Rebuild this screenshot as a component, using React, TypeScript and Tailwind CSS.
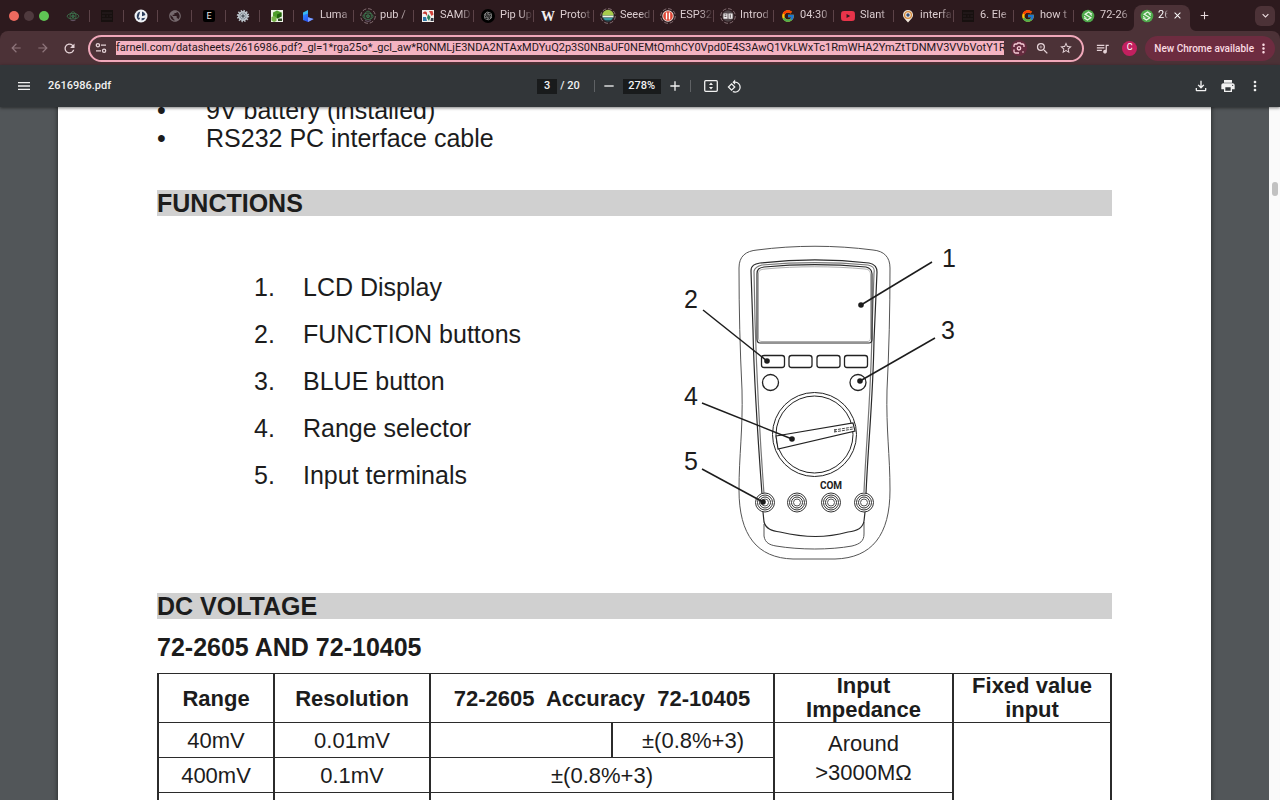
import type { ReactNode } from 'react';
import {
  MdAdd,
  MdArrowBack,
  MdArrowForward,
  MdClose,
  MdExpandMore,
  MdMenu,
  MdMoreVert,
  MdOutlineFileDownload,
  MdOutlineZoomIn,
  MdPrint,
  MdPublic,
  MdQueueMusic,
  MdRefresh,
  MdRemove,
  MdRotate90DegreesCcw,
  MdStarBorder,
} from 'react-icons/md';
import { FcGoogle } from 'react-icons/fc';
import { SiYoutube } from 'react-icons/si';
import { RiOpenaiFill } from 'react-icons/ri';

const URL_TEXT =
  'farnell.com/datasheets/2616986.pdf?_gl=1*rga25o*_gcl_aw*R0NMLjE3NDA2NTAxMDYuQ2p3S0NBaUF0NEMtQmhCY0Vpd0E4S3AwQ1VkLWxTc1RmWHA2YmZtTDNMV3VVbVotY1Rc';

const Svg = ({ children, className = 'size-[14px]' }: { children: ReactNode; className?: string }) => (
  <svg viewBox="0 0 14 14" className={`${className} shrink-0`} aria-hidden="true">
    {children}
  </svg>
);

const Atom = ({ ring = false }: { ring?: boolean }) => (
  <Svg className={ring ? 'size-4' : 'size-[14px]'}>
    {ring && <circle cx="7" cy="7" r="6.4" fill="none" stroke="#8d777c" strokeWidth="0.8" strokeDasharray="3.4 1.6" />}
    <g fill="none" stroke="#3f7a52" strokeWidth="0.8">
      <ellipse cx="7" cy="7.2" rx={ring ? 4.4 : 5.8} ry="2.8" />
      <path d="M4.600 9.800C3.200 6 4.800 2.800 7 2.800s3.800 3.200 2.400 7" />
      <circle cx="7" cy="7.200" r="1.300" fill="#2f5a40" />
    </g>
    <path d="M4.500 11a5 5 0 0 0 5 0" stroke="#74657a" fill="none" strokeWidth="0.8" />
  </Svg>
);

const DarkSheet = () => (
  <Svg>
    <rect x="1" y="1" width="12" height="12" fill="#17100f" />
    <path d="M2 4h10M2 7h3M6.5 7h1.6M9.5 7H12M2 10h10" stroke="#2c2124" strokeWidth="0.9" />
  </Svg>
);

const Compass = () => (
  <Svg>
    <circle cx="7" cy="7" r="6.500" fill="#eef1f5" />
    <path d="M6.200 2.600A4.600 4.600 0 0 0 5 11l1.200-2.200H4.400Z" fill="#2b3d5c" />
    <path d="M8 2.500a4.600 4.600 0 0 1 3.500 3.600L8 7.200ZM7.600 9.200l3.700-.4a4.600 4.600 0 0 1-3.700 2.800Z" fill="#2b3d5c" />
  </Svg>
);

const LetterE = () => (
  <Svg>
    <rect x="1" y="1" width="12" height="12" rx="2" fill="#000" />
    <text x="7" y="10.200" textAnchor="middle" fontSize="9" fill="#e8e8e8" fontFamily="Roboto, sans-serif">
      E
    </text>
  </Svg>
);

const Gear = () => (
  <Svg>
    <circle cx="7" cy="7" r="5" fill="#87919a" stroke="#b9c1c8" strokeWidth="2.400" strokeDasharray="1.300 1.300" />
    <circle cx="7" cy="7" r="4.200" fill="none" stroke="#cdd3d8" strokeWidth="1" />
    <path d="M7 3.600v6.800M3.600 7h6.800M4.600 4.600l4.800 4.800M9.400 4.600 4.600 9.400" stroke="#dfe4e8" strokeWidth="0.7" />
    <circle cx="7" cy="7" r="1.500" fill="#525b63" />
  </Svg>
);

const GreenBlocks = () => (
  <Svg>
    <rect x="1" y="1" width="12" height="12" fill="#eef3e8" />
    <path d="M3 3.500 7 1.500l4.500 2v4L7 9.500 3 7.500Z" fill="#4f9e2c" />
    <path d="m7 5.500 4.500-2v4L7 9.500Z" fill="#23630f" />
    <path d="m1.500 8 2.500-1 2.500 1.500V12L4 13l-2.500-1.500Z" fill="#78b44a" />
    <path d="M8 9.500h4V12H8Z" fill="#2f4a26" />
  </Svg>
);

const Luma = () => (
  <Svg>
    <defs>
      <linearGradient id="luma" x1="0" x2="1" y1="0" y2="1">
        <stop offset="0" stopColor="#2b8cff" />
        <stop offset="1" stopColor="#2a35e8" />
      </linearGradient>
    </defs>
    <path d="M2 3.500 7 1v7.500l-5 2.700Z" fill="#38b8ef" />
    <path d="M2 11V6l5-1.500v3.700L12.600 10 7 13Z" fill="url(#luma)" />
    <path d="M7 8.200 12.600 10 7 13Z" fill="#7ea2ff" />
  </Svg>
);

const Patchwork = () => (
  <Svg>
    <rect x="1" y="1" width="12" height="12" fill="#f4f1ee" />
    <path d="M1.500 4.500C3 2 5 2 6 4v3l-1.500-2Z" fill="#c63b34" />
    <path d="M8 2h3.500l1 3.500-2 1.500Z" fill="#d2433c" />
    <path d="M2 8h3l1 4H2Z" fill="#2c79a8" />
    <path d="m7 5 2.500 3L8 12l-2-3Z" fill="#2d8059" />
    <path d="M10 9h2.500v3H9.500Z" fill="#353b47" />
  </Svg>
);

const OpenAi = () => (
  <span className="flex size-[14px] shrink-0 items-center justify-center rounded-full bg-black text-[#b8b8b8]">
    <RiOpenaiFill size={10} />
  </span>
);

const LetterW = () => (
  <Svg>
    <text x="7" y="12" textAnchor="middle" fontSize="14" fontWeight="700" fill="#f2eff0" fontFamily="'Liberation Serif', serif">
      W
    </text>
  </Svg>
);

const Ring = ({ children }: { children: ReactNode }) => (
  <Svg className="size-4">
    <circle cx="7" cy="7" r="6.400" fill="none" stroke="#8d777c" strokeWidth="0.8" strokeDasharray="3.400 1.600" />
    {children}
  </Svg>
);

const Seeed = () => (
  <Ring>
    <circle cx="7" cy="7" r="5" fill="#274d55" />
    <path d="M2 6.600a5 5 0 0 1 10 0Z" fill="#a7cb4c" />
    <path d="M2.200 6.700h9.600v1.500H2.200Z" fill="#f0f3e6" />
    <path d="M3 8.700h8L9.800 10.600H4.200Z" fill="#3b9aa0" />
  </Ring>
);

const PausedDisc = () => (
  <Ring>
    <circle cx="7" cy="7" r="5" fill="#f2e9e4" />
    <circle cx="7" cy="7" r="4.200" fill="#df4433" />
    <path d="M5.700 4v6M8.300 4v6" stroke="#fff" strokeWidth="1.200" />
  </Ring>
);

const Book = () => (
  <Ring>
    <circle cx="7" cy="7" r="5" fill="#4f4548" />
    <path d="M3 4.800h3.600v4.600H3ZM7.400 4.800H11v4.600H7.400Z" fill="#f0edee" />
    <path d="M4 6h1.600M4 7.400h1.600M9 5.600v3" stroke="#4f4548" strokeWidth="0.8" />
  </Ring>
);

const Pin = () => (
  <Svg>
    <path d="M7 13.500 3.200 9.200a5 5 0 1 1 7.600 0Z" fill="#f0e6da" />
    <circle cx="7" cy="6" r="3.400" fill="none" stroke="#d58a3c" strokeWidth="1.300" />
    <circle cx="7" cy="6" r="1.700" fill="#34507d" />
  </Svg>
);

const Farnell = () => (
  <Svg>
    <circle cx="7" cy="7" r="6.300" fill="#4ea84a" />
    <path d="M11 5.200 7.600 3 4.200 5.200 9.800 8.800 6.400 11 3 8.800" fill="none" stroke="#e5f5e2" strokeWidth="1.300" />
    <path d="M8.600 5 11 6.600M3 7.200 5.600 9" fill="none" stroke="#e5f5e2" strokeWidth="0.900" />
  </Svg>
);

const pinnedTabs: { name: string; icon: ReactNode }[] = [
  { name: 'Atom', icon: <Atom /> },
  { name: 'Sheet', icon: <DarkSheet /> },
  { name: 'Compass', icon: <Compass /> },
  { name: 'Globe', icon: <MdPublic size={14} className="text-[#75696d]" /> },
  { name: 'E', icon: <LetterE /> },
  { name: 'Gear', icon: <Gear /> },
  { name: 'Blocks', icon: <GreenBlocks /> },
];

const tabs: { title: string; icon: ReactNode }[] = [
  { title: 'Luma', icon: <Luma /> },
  { title: 'pub /', icon: <Atom ring /> },
  { title: 'SAMD', icon: <Patchwork /> },
  { title: 'Pip Up', icon: <OpenAi /> },
  { title: 'Protot', icon: <LetterW /> },
  { title: 'Seeed', icon: <Seeed /> },
  { title: 'ESP32', icon: <PausedDisc /> },
  { title: 'Introd', icon: <Book /> },
  { title: '04:30', icon: <FcGoogle size={14} /> },
  { title: 'Slant', icon: <SiYoutube size={14} className="text-[#e8344a]" /> },
  { title: 'interfa', icon: <Pin /> },
  { title: '6. Ele', icon: <DarkSheet /> },
  { title: 'how t', icon: <FcGoogle size={14} /> },
  { title: '72-26', icon: <Farnell /> },
];

const fade = '[mask-image:linear-gradient(to_right,#000_60%,transparent)]';

function TabStrip() {
  return (
    <div className="flex h-[31px] shrink-0 items-stretch bg-[#2d1a1e] text-[11px] text-[#dccdd0]">
      <div className="flex w-14 shrink-0 items-center gap-[5px] pl-[9px]">
        <button aria-label="Close window" className="size-[10px] rounded-full bg-[#ed6a5f]" />
        <button aria-label="Minimise window" className="size-[10px] rounded-full bg-[#4f3a3e]" />
        <button aria-label="Zoom window" className="size-[10px] rounded-full bg-[#5fc454]" />
      </div>
      <div role="tablist" className="flex min-w-0">
        {pinnedTabs.map((t) => (
          <div key={t.name} className="flex w-[34px] shrink-0 items-center">
            <button role="tab" aria-label={t.name} className="flex flex-1 justify-center">
              {t.icon}
            </button>
            <span className="h-3 w-px bg-[#5c4348]" />
          </div>
        ))}
        {tabs.map((t, i) => (
          <div key={t.title} className="flex w-[60px] min-w-0 items-center">
            <button role="tab" className="flex min-w-0 flex-1 items-center pl-1 text-left">
              <span className="flex w-[22px] shrink-0 items-center justify-center pr-[2px]">{t.icon}</span>
              <span className={`w-[33px] overflow-hidden whitespace-nowrap ${fade}`}>{t.title}</span>
            </button>
            {i < tabs.length - 1 && <span className="h-3 w-px bg-[#5c4348]" />}
          </div>
        ))}
        <div className="relative mt-[5px] flex w-[56px] items-center rounded-t-lg bg-[#4c3237] pb-[5px] pl-[6px]">
          <svg viewBox="0 0 6 6" className="absolute -left-[6px] bottom-0 size-[6px]" aria-hidden="true">
            <path d="M6 0v6H0a6 6 0 0 0 6-6Z" fill="#4c3237" />
          </svg>
          <svg viewBox="0 0 6 6" className="absolute -right-[6px] bottom-0 size-[6px]" aria-hidden="true">
            <path d="M0 0v6h6a6 6 0 0 1-6-6Z" fill="#4c3237" />
          </svg>
          <button role="tab" aria-selected="true" className="flex items-center text-white">
            <span className="flex w-[18px]">
              <Farnell />
            </span>
            <span className={`w-[10px] overflow-hidden whitespace-nowrap ${fade}`}>26</span>
          </button>
          <button aria-label="Close tab" className="ml-1 text-white">
            <MdClose size={11} />
          </button>
        </div>
      </div>
      <button aria-label="New tab" className="ml-2 shrink-0 text-[#e6d8db]">
        <MdAdd size={13} />
      </button>
      <button aria-label="Search tabs" className="mr-[5px] ml-auto flex size-5 shrink-0 items-center justify-center self-center rounded-md bg-[#4c3237] text-[#f0e2e5]">
        <MdExpandMore size={13} />
      </button>
    </div>
  );
}

function AddressBar() {
  return (
    <div className="shrink-0 bg-[#2d1a1e]">
      <div className="flex h-[34px] items-center rounded-t-lg bg-[#4c3237] pr-[5px] pl-[9px] text-[#e5d3d7]">
        <button aria-label="Back" className="mr-[13px] text-[#8e757b]">
          <MdArrowBack size={14} />
        </button>
        <button aria-label="Forward" className="mr-3 text-[#8e757b]">
          <MdArrowForward size={14} />
        </button>
        <button aria-label="Reload">
          <MdRefresh size={15} />
        </button>
        <div className="mr-[10px] ml-[11px] flex h-[27px] min-w-0 flex-1 items-center rounded-full border-2 border-[#f0a8ba] bg-[#4c3237] pr-[9px] pl-[5px]">
          <button aria-label="View site information" className="mr-[9px]">
            <svg viewBox="0 0 12 12" className="size-3" fill="none" stroke="currentColor" strokeWidth="1.300" aria-hidden="true">
              <circle cx="2.900" cy="3.200" r="1.600" />
              <path d="M6 3.200h5M1 8.800h5" />
              <circle cx="9.100" cy="8.800" r="1.600" />
            </svg>
          </button>
          <input
            aria-label="Address"
            readOnly
            value={URL_TEXT}
            className="h-[14px] min-w-0 flex-1 bg-[#f4b3c2] text-[11px] leading-[14px] text-[#24161a] outline-none"
          />
          <button aria-label="Search with Lens" className="ml-[7px] flex size-4 items-center justify-center rounded-full bg-[#662b3f] text-[#f7cdd7]">
            <svg viewBox="0 0 12 12" className="size-3" fill="none" stroke="currentColor" strokeWidth="1.300" aria-hidden="true">
              <path d="M1 5V3.500A1.500 1.500 0 0 1 2.500 2H4l.7-1h2.600L8 2h1.500A1.500 1.500 0 0 1 11 3.500V5M1 7.500v2A1.500 1.500 0 0 0 2.500 11H6" />
              <circle cx="6" cy="6.300" r="1.700" />
              <circle cx="10" cy="10" r="0.800" fill="currentColor" stroke="none" />
            </svg>
          </button>
          <button aria-label="Zoom" className="ml-2">
            <MdOutlineZoomIn size={15} />
          </button>
          <button aria-label="Bookmark this page" className="ml-[9px]">
            <MdStarBorder size={14} />
          </button>
        </div>
        <button aria-label="Media controls" className="mr-3 ml-[1px]">
          <MdQueueMusic size={15} />
        </button>
        <button aria-label="Profile" className="mr-2 flex size-[15px] items-center justify-center rounded-full bg-[#c2205f] text-[9px] text-white">
          C
        </button>
        <button className="flex h-[25px] items-center rounded-full bg-[#6d2c40] pr-1 pl-[9px] text-[10px] font-medium whitespace-nowrap text-[#fbdbe2]">
          New Chrome available
          <MdMoreVert size={15} className="ml-[2px]" />
        </button>
      </div>
    </div>
  );
}

function PdfToolbar() {
  return (
    <header className="relative z-10 grid h-[42px] shrink-0 grid-cols-[1fr_auto_1fr] items-center bg-[#323639] pr-[17px] pl-4 text-[11px] font-medium text-[#f1f1f1] shadow-[0_1px_3px_rgba(0,0,0,0.5)]">
      <div className="flex items-center gap-4">
        <button aria-label="Menu">
          <MdMenu size={16} />
        </button>
        <h1 className="font-medium">2616986.pdf</h1>
      </div>
      <div className="flex items-center">
        <input aria-label="Page" defaultValue="3" className="mr-[3px] h-[15px] w-5 bg-[#191b1c] text-center" />
        <span>/ 20</span>
        <span className="mr-[6px] ml-[14px] h-3 w-px bg-[#5f6265]" />
        <button aria-label="Zoom out">
          <MdRemove size={16} />
        </button>
        <input aria-label="Zoom level" defaultValue="278%" className="mx-[6px] h-[15px] w-[38px] bg-[#191b1c] text-center" />
        <button aria-label="Zoom in">
          <MdAdd size={16} />
        </button>
        <span className="mr-[13px] ml-[7px] h-3 w-px bg-[#5f6265]" />
        <button aria-label="Fit to page" className="mr-[9px]">
          <svg viewBox="0 0 14 12" className="h-3 w-[14px]" aria-hidden="true">
            <rect x="0.700" y="0.700" width="12.600" height="10.600" rx="1" fill="none" stroke="currentColor" strokeWidth="1.300" />
            <path d="M7 2.500 9 5H5ZM7 9.500 5 7h4Z" fill="currentColor" />
          </svg>
        </button>
        <button aria-label="Rotate counterclockwise">
          <MdRotate90DegreesCcw size={15} />
        </button>
      </div>
      <div className="flex items-center justify-end gap-[11px]">
        <button aria-label="Download">
          <MdOutlineFileDownload size={16} />
        </button>
        <button aria-label="Print">
          <MdPrint size={16} />
        </button>
        <button aria-label="More actions">
          <MdMoreVert size={16} />
        </button>
      </div>
    </header>
  );
}

function Multimeter() {
  const jacks = [765, 797, 831, 864];
  const leads = [
    { n: 1, x: 942, y: 267, d: 'M932 262 861 305', cx: 861, cy: 305 },
    { n: 2, x: 684, y: 308, d: 'M703 310 767 361', cx: 767, cy: 361 },
    { n: 3, x: 941, y: 339, d: 'M935 338 860 381', cx: 860, cy: 381 },
    { n: 4, x: 684, y: 405, d: 'M702 403 792 439', cx: 792, cy: 439 },
    { n: 5, x: 684, y: 470, d: 'M702 469 763 502', cx: 763, cy: 502 },
  ];
  return (
    <svg viewBox="680 244 280 320" className="h-80 w-[280px] shrink-0" role="img" aria-label="Multimeter diagram">
      <g fill="none" stroke="#555" strokeWidth="1">
        <path d="M739 268C739 256 746 251 757 250C795 245 835 245 873 250C884 251 890 257 890 268C890 310 889 350 887 390C886 430 890 455 890 490C890 535 872 558 835 559H793C757 558 739 535 739 490C739 455 743 430 742 390C740 350 739 310 739 268Z" />
        <path d="M764 524V536C765 543 770 545 776 546C800 550 830 550 852 546C860 544 864 541 864 534V522" />
      </g>
      <g fill="none" stroke="#2a2a2a" strokeWidth="1.200">
        <path d="M762 494C758 440 754 385 753 330L751 271C751 265 755 264 760 263C795 259 835 259 869 263C874 264 877 266 877 272L874 340C873 400 868 445 866 494M763 512 764 522C766 529 772 531 780 532C806 538 826 538 848 532C858 531 863 528 864 521L865 512" />
        <path stroke="#777" d="M755 320 754 271C755 267 758 266 762 265C795 262 835 262 868 265C873 266 875 268 874 273L872 330C871 395 866 445 864 492M764 494C760 440 757 385 755 320" />
        <path d="M757 274C757 269 759 268 764 267C797 264 832 264 866 267C870 268 872 270 872 274V339C872 342 871 343 869 343H760C758 343 757 342 757 339Z" />
        <path stroke="#999" strokeWidth="0.8" d="M758.500 274C758.500 270 761 269.500 765 269C797 266 832 266 865 269C869 269.500 870.500 271 870.500 275V338C870.500 341 869 341.500 867 341.500H762C760 341.500 758.500 341 758.500 338Z" />
      </g>
      <g fill="none" stroke="#222" strokeWidth="1.300">
        <rect x="761.500" y="355.500" width="23" height="12" rx="2.500" />
        <rect x="789" y="355.500" width="23" height="12" rx="2.500" />
        <rect x="817" y="355.500" width="23" height="12" rx="2.500" />
        <rect x="844.500" y="355.500" width="23" height="12" rx="2.500" />
        <circle cx="770.500" cy="382.500" r="8" />
        <circle cx="858" cy="382.500" r="8" />
        <circle cx="814.500" cy="434.500" r="42" strokeWidth="1" />
        <circle cx="814.500" cy="434.500" r="38.500" strokeWidth="1" />
      </g>
      <path d="M776 436 853 423 855 431 778 449Z" fill="#fff" stroke="#222" strokeWidth="1.100" />
      <path d="M834 430 853 427M834 432 853 429M835 429v3" stroke="#333" strokeWidth="0.900" strokeDasharray="3 1" fill="none" />
      {jacks.map((x) => (
        <g key={x} fill="none" stroke="#333" strokeWidth="1">
          <circle cx={x} cy="502.500" r="9.500" fill="#fff" />
          <circle cx={x} cy="502.500" r="7.500" />
          <circle cx={x} cy="502.500" r="5.500" />
          <circle cx={x} cy="502.500" r="3.500" stroke="#555" />
        </g>
      ))}
      <text x="831" y="489" textAnchor="middle" fontSize="10" fontWeight="700" fill="#222" fontFamily="Roboto, sans-serif">
        COM
      </text>
      {leads.map((l) => (
        <g key={l.n} fill="#1c1c1c">
          <text x={l.x} y={l.y} fontSize="25" fontFamily="'Liberation Sans', sans-serif">
            {l.n}
          </text>
          <path d={l.d} stroke="#1c1c1c" strokeWidth="1.500" />
          <circle cx={l.cx} cy={l.cy} r="2.800" />
        </g>
      ))}
    </svg>
  );
}

const functionNames = ['LCD Display', 'FUNCTION buttons', 'BLUE button', 'Range selector', 'Input terminals'];

const head = 'border-x-2 border-y border-[#2b2b2b] p-0 font-bold';
const cell = 'border-x-2 border-y border-[#2b2b2b] p-0';

function VoltageTable() {
  return (
    <table className="mt-3 w-full table-fixed border-collapse text-center text-[22px] leading-[25px]">
      <colgroup>
        <col className="w-[116px]" />
        <col className="w-[156px]" />
        <col className="w-[182px]" />
        <col className="w-[162px]" />
        <col className="w-[179px]" />
        <col />
      </colgroup>
      <thead>
        <tr className="h-[49px]">
          <th className={head}>Range</th>
          <th className={head}>Resolution</th>
          <th colSpan={2} className={`${head} whitespace-pre`}>
            {'72-2605  Accuracy  72-10405'}
          </th>
          <th className={`${head} leading-6`}>
            Input
            <br />
            Impedance
          </th>
          <th className={`${head} leading-6`}>
            Fixed value
            <br />
            input
          </th>
        </tr>
      </thead>
      <tbody>
        <tr className="h-[35px]">
          <td className={cell}>40mV</td>
          <td className={cell}>0.01mV</td>
          <td className={cell} />
          <td className={cell}>±(0.8%+3)</td>
          <td rowSpan={2} className={`${cell} leading-[29px]`}>
            Around
            <br />
            &gt;3000MΩ
          </td>
          <td rowSpan={3} className={cell} />
        </tr>
        <tr className="h-[35px]">
          <td className={cell}>400mV</td>
          <td className={cell}>0.1mV</td>
          <td colSpan={2} className={cell}>
            ±(0.8%+3)
          </td>
        </tr>
        <tr className="h-[35px]">
          <td className={cell} />
          <td className={cell} />
          <td colSpan={2} className={cell} />
          <td className={cell} />
        </tr>
      </tbody>
    </table>
  );
}

const bar = 'bg-[#d0d0d0] text-[25px] leading-[26px] font-bold';

export default function App() {
  return (
    <div className="flex h-screen flex-col overflow-hidden font-[Roboto,'Noto_Sans',sans-serif]">
      <TabStrip />
      <AddressBar />
      <PdfToolbar />
      <main className="flex min-h-0 flex-1 bg-[#525659]">
        <div className="min-w-0 flex-1 overflow-hidden px-[58px]">
          <article className="-mt-[11px] bg-white px-[99px] font-['Liberation_Sans',Arial,sans-serif] text-[25px] text-[#1c1c1c] shadow-[0_0_5px_rgba(0,0,0,0.6)]">
            <ul className="leading-7">
              {['9V battery (installed)', 'RS232 PC interface cable'].map((t) => (
                <li key={t} className="flex">
                  <span className="w-[49px]">•</span>
                  {t}
                </li>
              ))}
            </ul>
            <h2 className={`${bar} mt-[38px]`}>FUNCTIONS</h2>
            <div className="flex items-start justify-between pt-7 pr-[152px] pb-[29px] pl-[97px]">
              <ol className="pt-5 leading-[47px]">
                {functionNames.map((t, i) => (
                  <li key={t} className="flex">
                    <span className="w-[49px]">{i + 1}.</span>
                    {t}
                  </li>
                ))}
              </ol>
              <Multimeter />
            </div>
            <h2 className={bar}>DC VOLTAGE</h2>
            <h3 className="mt-[14px] leading-7 font-bold">72-2605 AND 72-10405</h3>
            <VoltageTable />
          </article>
        </div>
        <div className="flex w-[11px] shrink-0 justify-center bg-[#fafafa] pt-[75px]">
          <span className="h-[14px] w-[6px] rounded-full bg-[#c1c1c1]" />
        </div>
      </main>
    </div>
  );
}
